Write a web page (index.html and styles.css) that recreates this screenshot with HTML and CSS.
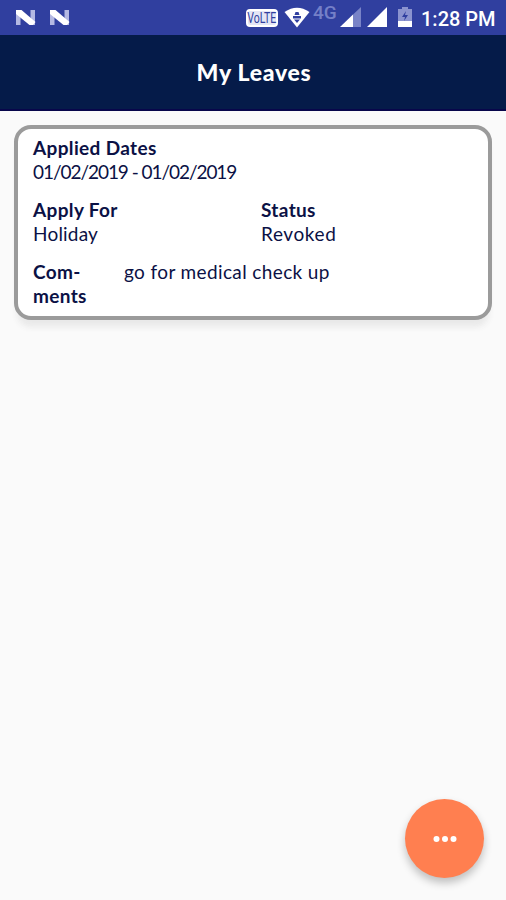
FILE: index.html
```
<!DOCTYPE html>
<html lang="en">
<head>
<meta charset="utf-8">
<title>My Leaves</title>
<link rel="stylesheet" href="styles.css">
</head>
<body>
<header class="status-bar">
  <svg class="notifications" width="58" height="20" viewBox="0 0 58 20">
    <g id="n">
      <path d="M1 2h4.500v15H1zM15.500 2H20v15h-4.500z" fill="#b4b9e3"/>
      <path d="M1 2h5.500L20.500 14 18 17h-3.500L1 6z" fill="#fff"/>
    </g>
    <use href="#n" x="34"/>
  </svg>
  <div class="indicators">
    <span class="volte"><span>VoLTE</span></span>
    <svg class="wifi" width="26" height="21" viewBox="0 0 26 21">
      <path d="M.5 5Q13-3.500 25.500 5L13 20.500z" fill="#fff"/>
      <path d="M10.500 8L11.500 5h3l1 3zM9 9h8v2.500H9zM10 12.500h6L13 16z" fill="#303f9f"/>
    </svg>
    <span class="network">4G</span>
    <svg class="signal-one" width="21" height="20" viewBox="0 0 21 20">
      <path d="M13 7.500L21 0v20h-8z" fill="#7983c7"/>
      <path d="M13 7.500V20H0z" fill="#fff"/>
    </svg>
    <svg class="signal-two" width="20" height="20" viewBox="0 0 20 20"><path d="M20 0v20H0z" fill="#fff"/></svg>
    <svg class="battery" width="14" height="20" viewBox="0 0 14 20">
      <path d="M4 0h6v2h4v12H0V2h4z" fill="#8b93cf"/>
      <path d="M8 4l-4 6h3l-1 4 4-6H7z" fill="#303f9f"/>
      <path d="M0 14h14v6H0z" fill="#fff"/>
    </svg>
    <time class="clock">1:28 PM</time>
  </div>
</header>
<div class="app-bar"><h1>My Leaves</h1></div>
<main>
  <article class="card">
    <section class="row">
      <div><h2>Applied Dates</h2><p class="dates">01/02/2019 - 01/02/2019</p></div>
    </section>
    <section class="row columns">
      <div><h2>Apply For</h2><p class="type">Holiday</p></div>
      <div><h2>Status</h2><p class="state">Revoked</p></div>
    </section>
    <section class="row comments">
      <h2>Com-<br>ments</h2><p class="comment">go for medical check up</p>
    </section>
  </article>
</main>
<button class="fab" aria-label="More">
  <svg width="24" height="8" viewBox="0 0 24 8" fill="#fff"><circle cx="3.500" cy="4" r="3"/><circle cx="12" cy="4" r="3"/><circle cx="20.500" cy="4" r="3"/></svg>
</button>
</body>
</html>
```
FILE: styles.css
```
* { box-sizing: border-box; }
body {
  margin: 0;
  height: 900px;
  overflow: hidden;
  background: #fafafa;
  color: #0b1145;
  font: 19px/24px Lato, sans-serif;
}
h1, h2, p { margin: 0; }
h2 { font-size: 19px; line-height: 24px; font-weight: 700; letter-spacing: .35px; }
svg { display: block; flex: none; }
.status-bar {
  height: 35px;
  display: flex;
  justify-content: space-between;
  background: #303f9f;
  padding: 0 11px 0 15px;
}
.notifications { margin-top: 8px; }
.indicators { display: flex; align-items: flex-start; color: #fff; }
.volte {
  display: flex;
  align-items: center;
  justify-content: center;
  width: 32px;
  height: 18px;
  margin-top: 9px;
  border: 2px solid #fff;
  border-radius: 4px;
  background: #e4e6f5;
  color: #303f9f;
  font: 15px/14px Roboto, sans-serif;
}
.volte span { transform: scaleX(.7); }
.wifi { margin: 7px 0 0 6px; }
.network { width: 27px; margin-left: 3px; margin-top: 3px; color: #7580c8; font: 500 19px/20px Roboto, sans-serif; }
.signal-one { margin-top: 7px; }
.signal-two { margin: 7px 0 0 6px; }
.battery { margin: 7px 0 0 11px; }
.clock { width: 74px; margin-left: 9px; margin-top: 7px; font: 500 20px/24px Roboto, sans-serif; white-space: nowrap; }
.app-bar {
  height: 76px;
  display: flex;
  align-items: center;
  justify-content: center;
  background: #051b49;
  border-bottom: 2px solid #08064b;
  color: #fff;
}
.app-bar h1 { font-size: 23px; line-height: 28px; font-weight: 900; letter-spacing: .7px; padding-left: 2px; }
main { padding: 14px 14px 0; }
.card {
  height: 195px;
  padding: 7px 15px;
  border: 4px solid #9b9b9b;
  border-radius: 17px;
  background: #fff;
  box-shadow: 0 10px 6px -3px #e9e9e9;
}
.dates { letter-spacing: -1.05px; }
.type { letter-spacing: .2px; }
.state { letter-spacing: .6px; }
.comment { letter-spacing: .38px; }
.row + .row { margin-top: 14px; }
.columns { display: grid; grid-template-columns: 1fr 1fr; }
.columns > div + div { padding-left: 8px; }
.comments { display: grid; grid-template-columns: 91px 1fr; }
.fab {
  position: absolute;
  left: 405px;
  top: 799px;
  width: 79px;
  height: 79px;
  display: flex;
  align-items: center;
  justify-content: center;
  border: 0;
  border-radius: 50%;
  background: #ff7f50;
  box-shadow: 0 5px 9px rgba(0, 0, 0, .24);
}
```
